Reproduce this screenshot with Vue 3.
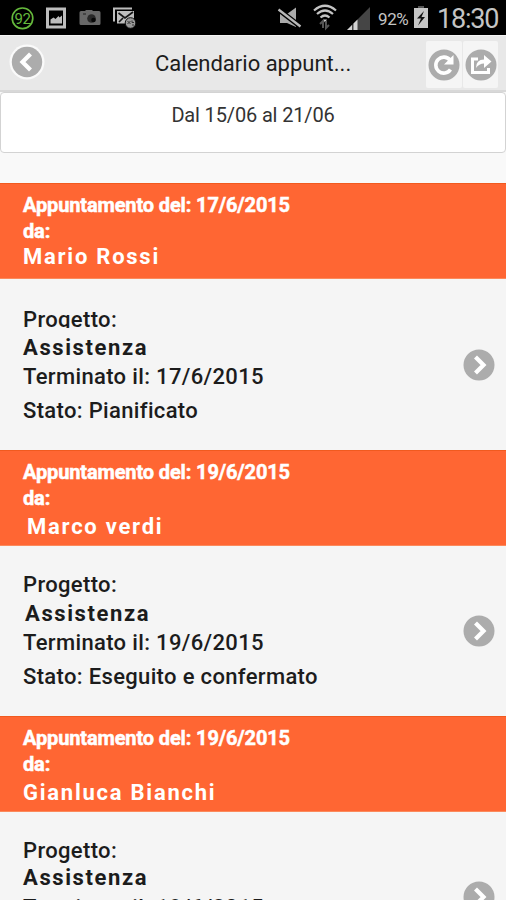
<template>
    <div class="screen">
        <div class="status-bar">
            <svg class="status-icons" width="140" height="35" viewBox="0 0 140 35">
                <circle cx="22.500" cy="18.300" r="10.300" fill="none" stroke="#65b83c" stroke-width="1.700" />
                <text x="22.500" y="23.500" class="badge-text">92</text>
                <path d="M46 7.500h20v21H46z M49 10.500v15h14v-15z" fill="#bdbdbd" fill-rule="evenodd" />
                <path d="M50.500 23.500v-4l3-2 2 1.500 3-3 1 1.500 2.500-2v8z" fill="#bdbdbd" />
                <path d="M81 11h4l1-1h6l1 1h6q1.500 0 1.500 1.500v11q0 1.500-1.500 1.500H81q-1.500 0-1.500-1.500v-11Q79.500 11 81 11z" fill="#686868" />
                <circle cx="91.500" cy="18.500" r="4.300" fill="#292929" />
                <circle cx="93.500" cy="20" r="2.300" fill="#080808" />
                <rect x="83" y="13" width="3" height="2" fill="#444" />
                <path d="M114 21.500V8.500h18" fill="none" stroke="#bdbdbd" stroke-width="2" />
                <path d="M117 11h17v12.500h-17z" fill="#bdbdbd" />
                <path d="M118.500 13l6.500 5 8-6M119 22l4-4" fill="none" stroke="#151515" stroke-width="1.700" />
                <circle cx="130.500" cy="23" r="5.300" fill="#999" stroke="#111" />
                <path d="M127.500 21l3 3M130.500 21l-3 3M132 20.500v2h2M132 25h2" fill="none" stroke="#333" />
            </svg>
            <svg class="status-icons" width="112" height="35" viewBox="270 0 112 35">
                <path d="M280 14h7l9-6.500V27l-9-4h-7z" fill="#aaa" />
                <path d="M279 10l22 17" stroke="#000" stroke-width="5" />
                <path d="M278.500 9.500l22 17" stroke="#b8b8b8" stroke-width="2.300" />
                <path d="M314 10.500q11-9.500 22 0M317 14q8-7 16 0M320.500 17.500q4.500-4 9 0" fill="none" stroke="#c4c4c4" stroke-width="2.200" />
                <path d="M323 19.500h4l-2 3z" fill="#c4c4c4" />
                <path d="M320 24l3-3v7M326 21v7l3-3" fill="none" stroke="#555" stroke-width="2" />
                <path d="M347 30l23-23v23z" fill="#454545" />
                <path d="M347 30l5-5v5zM353.500 30v-6.500l4-4V30z" fill="#d2d2d2" />
            </svg>
            <span class="percent">92%</span>
            <svg class="battery" width="16" height="24" viewBox="0 0 16 24">
                <path d="M5 1h6v2H5z" fill="#555" />
                <path d="M1 3h14v20H1z" fill="#c5c5c5" />
                <path d="M11 6L4 13.500h4L5 20.500l7-8.500H8.500z" fill="#111" />
            </svg>
            <span class="clock">18:30</span>
        </div>

        <header class="toolbar">
            <svg class="back" width="36" height="36" viewBox="0 0 36 36">
                <circle cx="18" cy="18" r="17.500" fill="#fafafa" />
                <circle cx="18" cy="18" r="15.200" fill="#acacac" />
                <path d="M21.500 10L13.500 18l8 8" fill="none" stroke="#fff" stroke-width="4.200" />
            </svg>
            <h1 class="title">Calendario appunt...</h1>
            <button class="tool">
                <svg width="32" height="32" viewBox="0 0 32 32">
                    <circle cx="16" cy="16" r="15.500" fill="#acacac" />
                    <path d="M22.500 20.500a8 8 0 1 1-.5-9.500" fill="none" stroke="#fff" stroke-width="3.600" />
                    <path d="M25.500 6v9.500H16z" fill="#fff" />
                </svg>
            </button>
            <button class="tool">
                <svg width="32" height="32" viewBox="0 0 32 32">
                    <circle cx="16" cy="16" r="15.500" fill="#acacac" />
                    <path d="M13 10H7.500v13.500h16V19" fill="none" stroke="#fff" stroke-width="3" />
                    <path d="M11 19q0-8.500 8-8.500V6l7.500 6.500L19 19v-4.500q-5 0-8 4.500z" fill="#fff" />
                </svg>
            </button>
        </header>

        <div class="period">Dal 15/06 al 21/06</div>

        <ul class="list">
            <li v-for="(item, i) in appointments" :key="i" :class="['item', `item-${i + 1}`]">
                <div class="item-head">
                    <p class="date">Appuntamento del: {{ item.date }}</p>
                    <p class="date from">da:</p>
                    <p class="name">{{ item.name }}</p>
                </div>
                <div class="item-body">
                    <div class="details">
                        <p class="label">Progetto:</p>
                        <p class="project">{{ item.project }}</p>
                        <p class="end">Terminato il: {{ item.date }}</p>
                        <p class="state">Stato: {{ item.state }}</p>
                    </div>
                    <svg class="arrow" width="32" height="32" viewBox="0 0 32 32">
                        <circle cx="16" cy="16" r="15.500" fill="#acacac" />
                        <path d="M12.500 8l8 8-8 8" fill="none" stroke="#fff" stroke-width="4.200" />
                    </svg>
                </div>
            </li>
        </ul>
    </div>
</template>

<script setup>
import { ref } from 'vue';

const appointments = ref([
    { date: '17/6/2015', name: 'Mario Rossi', project: 'Assistenza', state: 'Pianificato' },
    { date: '19/6/2015', name: 'Marco verdi', project: 'Assistenza', state: 'Eseguito e confermato' },
    { date: '19/6/2015', name: 'Gianluca Bianchi', project: 'Assistenza', state: 'Pianificato' },
]);
</script>

<style>
body {
    background: #f9f9f9;
    overflow: hidden;
}
</style>

<style scoped>
.screen {
    width: 506px;
    height: 900px;
    overflow: hidden;
    background: #f9f9f9;
    color: #1c1c1c;
    font-family: Roboto, sans-serif;
}

.status-bar {
    display: flex;
    height: 35px;
    background: #000;
    color: #c4c4c4;
}

.status-icons + .status-icons {
    margin-left: 130px;
}

.badge-text {
    fill: #65b83c;
    font-size: 15px;
    letter-spacing: -0.5px;
    text-anchor: middle;
}

.percent {
    width: 32px;
    margin-left: -4px;
    font-size: 17px;
    line-height: 39px;
    letter-spacing: -0.4px;
    white-space: nowrap;
}

.battery {
    margin: 5px 0 0 3px;
}

.clock {
    margin-left: 8px;
    font-size: 27px;
    line-height: 39px;
    letter-spacing: -1.2px;
}

.toolbar {
    display: flex;
    align-items: flex-start;
    box-sizing: border-box;
    height: 57px;
    padding: 5px 8px 0 9px;
    border-top: 1px solid #f5f5f5;
    border-bottom: 2px solid #d8d8d8;
    background: #e8e8e8;
}

.back {
    margin-top: 3px;
}

.title {
    flex: 1;
    margin: 0;
    padding-left: 110px;
    font-size: 22px;
    font-weight: 400;
    line-height: 45px;
    white-space: nowrap;
}

.tool {
    display: flex;
    align-items: center;
    justify-content: center;
    width: 36px;
    height: 47px;
    padding: 0;
    border: 0;
    border-radius: 2px;
    background: #f5f5f5;
}

.tool + .tool {
    width: 35px;
    margin-left: 1px;
}

.period {
    box-sizing: border-box;
    height: 61px;
    border: 1px solid #d3d3d3;
    border-radius: 4px;
    background: #fff;
    color: #333;
    font-size: 20px;
    line-height: 44px;
    letter-spacing: -0.15px;
    text-align: center;
}

.list {
    margin: 30px 0 0;
    padding: 0;
    list-style: none;
}

.item {
    height: 266px;
}

.item-1 {
    height: 267px;
}

p {
    margin: 0;
    white-space: nowrap;
}

.item-head {
    box-sizing: border-box;
    height: 96px;
    padding: 9px 23px 0;
    border-top: 1px solid #f15a1f;
    border-bottom: 1px solid #fb8a5c;
    background: #ff6633;
    color: #fff;
}

.date {
    font-size: 20px;
    font-weight: 700;
    line-height: 25px;
    letter-spacing: -0.14px;
    -webkit-text-stroke: 0.5px #fff;
}

.from {
    padding-top: 1px;
}

.name {
    font-size: 22px;
    font-weight: 700;
    line-height: 26px;
    letter-spacing: 1.75px;
}

.item-2 .name,
.item-3 .name {
    padding-top: 3px;
}

.item-2 .name {
    padding-left: 4px;
}

.item-body {
    display: flex;
    justify-content: space-between;
    box-sizing: border-box;
    height: 170px;
    padding: 24px 11px 0 23px;
    background: #f5f5f5;
    font-size: 22px;
    font-weight: 500;
    line-height: 29px;
    letter-spacing: 0.34px;
}

.item-1 .item-body {
    height: 171px;
    padding-top: 25px;
}

.item-1 .label {
    box-sizing: border-box;
    height: 24px;
    padding-top: 1px;
}

/* the project name has its own backdrop and covers the tail of the label above */
.item-1 .project {
    position: relative;
    padding-top: 5px;
    background: #f5f5f5;
}

.project {
    font-weight: 700;
    letter-spacing: 1.6px;
}

.item-2 .project {
    padding-left: 2px;
}

.item-3 .project {
    line-height: 26px;
}

.item-3 .end {
    padding-top: 2px;
}

.state {
    margin-top: 5px;
}

.arrow {
    margin-top: 45px;
}
</style>
